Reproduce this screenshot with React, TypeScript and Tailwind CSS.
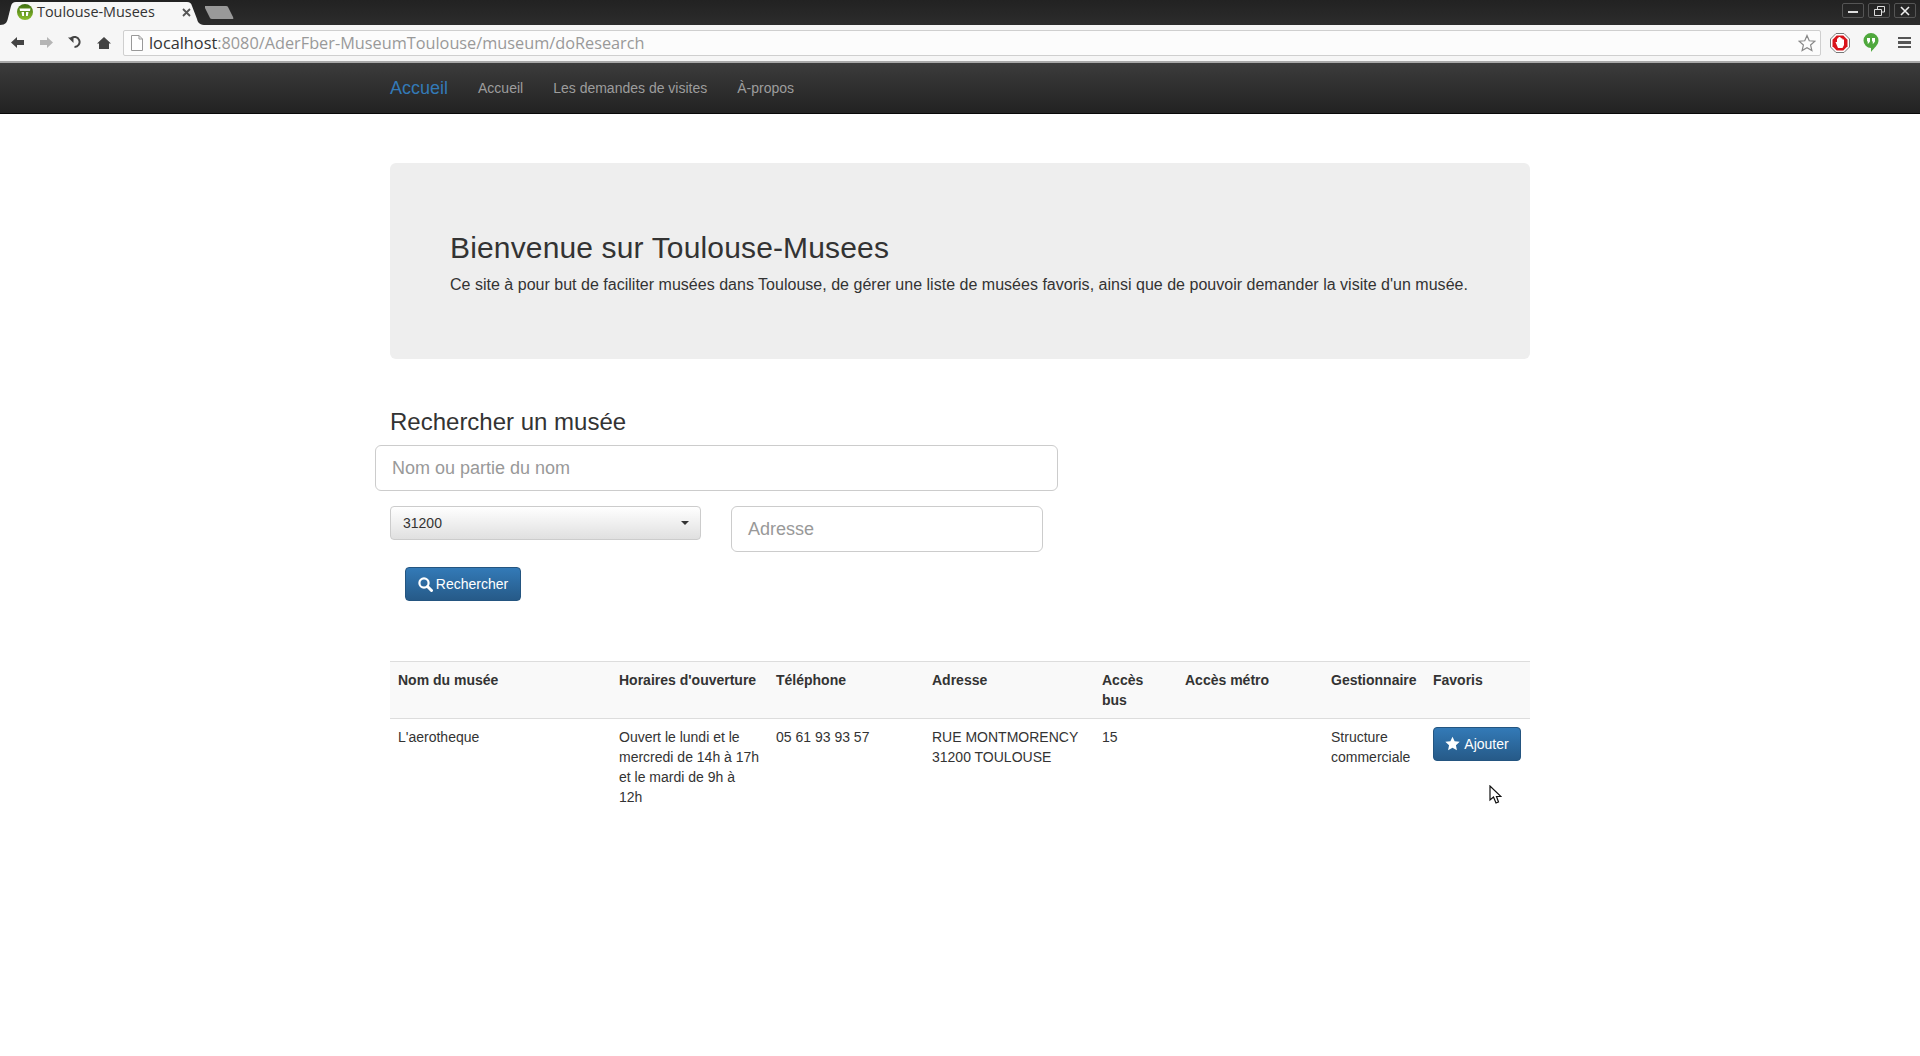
import React from 'react';

const columns = [
  { title: 'Nom du musée', width: 'w-[221px]', pad: 'pl-[8px]' },
  { title: "Horaires d'ouverture", width: 'w-[157px]', pad: 'pl-[8px]' },
  { title: 'Téléphone', width: 'w-[156px]', pad: 'pl-[8px]' },
  { title: 'Adresse', width: 'w-[170px]', pad: 'pl-[8px]' },
  { title: 'Accès bus', width: 'w-[83px]', pad: 'pl-[8px]' },
  { title: 'Accès métro', width: 'w-[146px]', pad: 'pl-[8px]' },
  { title: 'Gestionnaire', width: 'w-[103px]', pad: 'pl-[8px]' },
  { title: 'Favoris', width: 'w-[104px]', pad: 'pl-[7px]' },
];

const BrowserBar = () => {
  return (
    <div className="font-['Open_Sans',sans-serif]">
      {/* tab strip */}
      <div className="relative flex h-[25px] items-end bg-gradient-to-b from-[#222222] to-[#2c2c2c]">
        <svg width="206" height="24" viewBox="0 0 206 24" className="absolute bottom-0 left-0">
          <path d="M0 24 C6 24 7 21 8 17 L11 5 C12 2 13 1 16 1 L187 1 C190 1 191 2 192 5 L197 18 C198 22 200 24 206 24 Z" fill="#f6f6f6" />
        </svg>
        <svg width="30" height="14" viewBox="0 0 30 14" className="absolute left-[205px] top-[6px]">
          <path d="M0 0 L21 0 C23 0 23 1 24 3 L28 11 C29 13 28 13 27 13 L7 13 C5 13 5 12 4 10 L0 2 Z" fill="#999999" />
        </svg>
        <div className="relative mb-[3px] flex h-[20px] w-[200px] items-center pl-[17px]">
          <svg width="16" height="16" viewBox="0 0 16 16">
            <defs>
              <linearGradient id="favicon" x1="0" y1="0" x2="0" y2="1">
                <stop offset="0" stopColor="#3f6f12" />
                <stop offset="1" stopColor="#8cc02c" />
              </linearGradient>
            </defs>
            <circle cx="8" cy="8" r="8" fill="url(#favicon)" />
            <path d="M2.5 4.5 H13.5 L13 7 H3 Z" fill="#fff" />
            <path d="M4.5 8 H7 V12 H5.2 Z M9 8 H11.5 L10.8 12 H9 Z" fill="#fff" />
          </svg>
          <span className="ml-[4px] text-[14.4px] leading-[20px] text-[#333]">Toulouse-Musees</span>
          <svg width="9" height="9" viewBox="0 0 9 9" className="ml-[27px]">
            <path d="M1 1 L8 8 M8 1 L1 8" stroke="#555" strokeWidth="1.8" />
          </svg>
        </div>
        <div className="absolute right-[4px] top-[3px] flex gap-[4px]">
          <div className="flex h-[15px] w-[22px] items-center justify-center rounded-[2px] border border-[#555]">
            <div className="mt-[2px] h-[2px] w-[10px] bg-[#ddd]" />
          </div>
          <div className="flex h-[15px] w-[22px] items-center justify-center rounded-[2px] border border-[#555]">
            <svg width="11" height="10" viewBox="0 0 11 10">
              <path d="M3.5 3 V.5 H10.5 V6 H7.5 M.5 3.5 H7.5 V9.5 H.5 Z" fill="none" stroke="#ddd" />
            </svg>
          </div>
          <div className="flex h-[15px] w-[22px] items-center justify-center rounded-[2px] border border-[#555]">
            <svg width="10" height="10" viewBox="0 0 10 10">
              <path d="M1 1 L9 9 M9 1 L1 9" stroke="#eee" strokeWidth="1.6" />
            </svg>
          </div>
        </div>
      </div>

      {/* toolbar */}
      <div className="flex h-[38px] items-center border-b-2 border-[#a9a9a9] bg-[#f6f6f6] pb-[1px]">
        <div className="flex w-[123px] items-center pl-[11px]">
          <svg width="13" height="11" viewBox="0 0 13 11">
            <path d="M0 5.5 L6 0 V3 H13 V8 H6 V11 Z" fill="#444" />
          </svg>
          <svg width="13" height="11" viewBox="0 0 13 11" className="ml-[16px]">
            <path d="M13 5.5 L7 0 V3 H0 V8 H7 V11 Z" fill="#b5b5b5" />
          </svg>
          <svg width="13" height="13" viewBox="0 0 13 13" className="ml-[15px]">
            <path d="M3 2.5 A5 5 0 1 1 6.5 11" fill="none" stroke="#444" strokeWidth="2" />
            <path d="M0 1.5 H5.5 V7 Z" fill="#444" />
          </svg>
          <svg width="14" height="12" viewBox="0 0 14 12" className="ml-[16px]">
            <path d="M7 0 L14 6.5 H12 V12 H2 V6.5 H0 Z" fill="#444" />
          </svg>
        </div>
        <div className="flex h-[26px] w-[1698px] items-center rounded-[2px] border border-[#cfcfcf] bg-[#fcfcfc] pl-[7px] pr-[4px]">
          <svg width="12" height="16" viewBox="0 0 12 16">
            <path d="M.5 .5 H8 L11.5 4 V15.5 H.5 Z M8 .5 V4 H11.5" fill="#fff" stroke="#999" />
          </svg>
          <span className="ml-[6px] text-[16.3px] leading-[20px] text-[#333]">localhost</span>
          <span className="text-[16.3px] leading-[20px] text-[#999]">:8080/AderFber-MuseumToulouse/museum/doResearch</span>
          <svg width="18" height="18" viewBox="0 0 24 24" className="ml-auto">
            <path d="M12 2 L15 9 L22.5 9.7 L16.8 14.7 L18.5 22 L12 18.2 L5.5 22 L7.2 14.7 L1.5 9.7 L9 9 Z" fill="none" stroke="#888" strokeWidth="1.6" />
          </svg>
        </div>
        <svg width="20" height="20" viewBox="0 0 20 20" className="ml-[9px]">
          <path d="M6 .5 H14 L19.5 6 V14 L14 19.5 H6 L.5 14 V6 Z" fill="#fff" stroke="#777" />
          <path d="M6.7 2.5 H13.3 L17.5 6.7 V13.3 L13.3 17.5 H6.7 L2.5 13.3 V6.7 Z" fill="#d9141b" />
          <path d="M5.5 9 H7 V5.5 H8 V4.5 H9 V5.5 V4 H10.5 V5 H11.5 V5.5 H12.5 V6.5 H14 V12 L12.5 15 H8 Z" fill="#fff" />
        </svg>
        <svg width="16" height="19" viewBox="0 0 16 19" className="ml-[13px]">
          <path d="M8 0 A7.5 7.5 0 0 1 15.5 7.5 C15.5 12 11 15 8 19 V15 A7.5 7.5 0 0 1 8 0 Z" fill="#4fa83d" />
          <path d="M4 5 H7 V8.5 L5.5 10.5 H4.5 L5 8.5 H4 Z M9 5 H12 V8.5 L10.5 10.5 H9.5 L10 8.5 H9 Z" fill="#fff" />
        </svg>
        <div className="ml-[19px] flex w-[13px] flex-col gap-[2px]">
          <div className="h-[2.5px] bg-[#555]" />
          <div className="h-[2.5px] bg-[#555]" />
          <div className="h-[2.5px] bg-[#555]" />
        </div>
      </div>
    </div>
  );
};

const Navbar = () => {
  return (
    <nav className="h-[51px] border-b border-[#080808] bg-gradient-to-b from-[#3c3c3c] to-[#222222]">
      <div className="mx-auto flex h-[50px] w-[1140px] items-center">
        <a className="text-[18px] leading-[20px] text-[#337ab7]">Accueil</a>
        <a className="ml-[30px] text-[14px] leading-[20px] text-[#9d9d9d]">Accueil</a>
        <a className="ml-[30px] text-[14px] leading-[20px] text-[#9d9d9d]">Les demandes de visites</a>
        <a className="ml-[30px] text-[14px] leading-[20px] text-[#9d9d9d]">À-propos</a>
      </div>
    </nav>
  );
};

const BlueButton = ({ children, className }: { children: React.ReactNode; className: string }) => {
  return (
    <button
      className={`flex h-[34px] items-center justify-center rounded-[4px] border border-[#245580] bg-gradient-to-b from-[#337ab7] to-[#265a88] text-[14px] text-white ${className}`}
    >
      {children}
    </button>
  );
};

const App = () => {
  return (
    <div className="h-[1056px] overflow-hidden bg-white font-['Liberation_Sans',sans-serif] text-[14px] leading-[20px] text-[#333]">
      <BrowserBar />
      <Navbar />

      <main className="mx-auto w-[1140px] pt-[49px]">
        <section className="h-[196px] rounded-[6px] bg-[#eeeeee] px-[60px] pt-[68px]">
          <h1 className="text-[30px] leading-[33px] tracking-[0.15px]">Bienvenue sur Toulouse-Musees</h1>
          <p className="mt-[9px] text-[16px] leading-[23px] tracking-[0.015px]">
            Ce site à pour but de faciliter musées dans Toulouse, de gérer une liste de musées favoris, ainsi que de pouvoir demander la visite d'un musée.
          </p>
        </section>

        <h2 className="mt-[50px] text-[24px] leading-[26px]">Rechercher un musée</h2>
        <div className="-ml-[15px] mt-[10px] flex h-[46px] w-[683px] items-center rounded-[6px] border border-[#cccccc] px-[16px] text-[18px] text-[#999]">
          Nom ou partie du nom
        </div>

        <div className="mt-[15px] flex items-start">
          <div className="flex h-[34px] w-[311px] items-center justify-between rounded-[4px] border border-[#cccccc] bg-gradient-to-b from-white to-[#e0e0e0] pl-[12px] pr-[11px]">
            <span>31200</span>
            <span className="h-0 w-0 border-x-[4px] border-t-[4px] border-x-transparent border-t-[#333]" />
          </div>
          <div className="ml-[30px] flex h-[46px] w-[312px] items-center rounded-[6px] border border-[#cccccc] px-[16px] text-[18px] text-[#999]">
            Adresse
          </div>
        </div>

        <BlueButton className="ml-[15px] mt-[15px] w-[116px]">
          <svg width="15" height="15" viewBox="0 0 15 15" className="mr-[3px]">
            <circle cx="6" cy="6" r="4.6" fill="none" stroke="#fff" strokeWidth="2.2" />
            <path d="M9.5 9.5 L13.5 13.5" stroke="#fff" strokeWidth="3" strokeLinecap="round" />
          </svg>
          Rechercher
        </BlueButton>

        <table className="mt-[60px] w-[1140px] table-fixed border-collapse">
          <thead>
            <tr className="border-y border-[#dddddd] bg-[#f9f9f9]">
              {columns.map((col) => (
                <th key={col.title} className={`${col.width} ${col.pad} py-[8px] pr-[8px] text-left align-top font-bold`}>
                  {col.title}
                </th>
              ))}
            </tr>
          </thead>
          <tbody>
            <tr>
              <td className="p-[8px] align-top">L'aerotheque</td>
              <td className="p-[8px] align-top">Ouvert le lundi et le mercredi de 14h à 17h et le mardi de 9h à 12h</td>
              <td className="p-[8px] align-top">05 61 93 93 57</td>
              <td className="p-[8px] align-top">RUE MONTMORENCY 31200 TOULOUSE</td>
              <td className="p-[8px] align-top">15</td>
              <td className="p-[8px] align-top"></td>
              <td className="p-[8px] align-top">Structure commerciale</td>
              <td className="p-[8px] pl-[7px] align-top">
                <BlueButton className="w-[88px]">
                  <svg width="15" height="15" viewBox="0 0 24 24" className="mr-[4px] -mt-[2px]">
                    <path d="M12 1 L15.4 8.3 L23.5 9.3 L17.5 14.8 L19.1 22.8 L12 18.8 L4.9 22.8 L6.5 14.8 L.5 9.3 L8.6 8.3 Z" fill="#fff" />
                  </svg>
                  Ajouter
                </BlueButton>
              </td>
            </tr>
          </tbody>
        </table>
      </main>

      {/* mouse pointer */}
      <svg width="13" height="20" viewBox="0 0 13 20" className="absolute left-[1489px] top-[785px]">
        <path d="M1 1 V15 L4.5 12 L7 18 L9.5 17 L7.5 11.5 H12 Z" fill="#fff" stroke="#111" strokeWidth="1.2" />
      </svg>
    </div>
  );
};

export default App;
